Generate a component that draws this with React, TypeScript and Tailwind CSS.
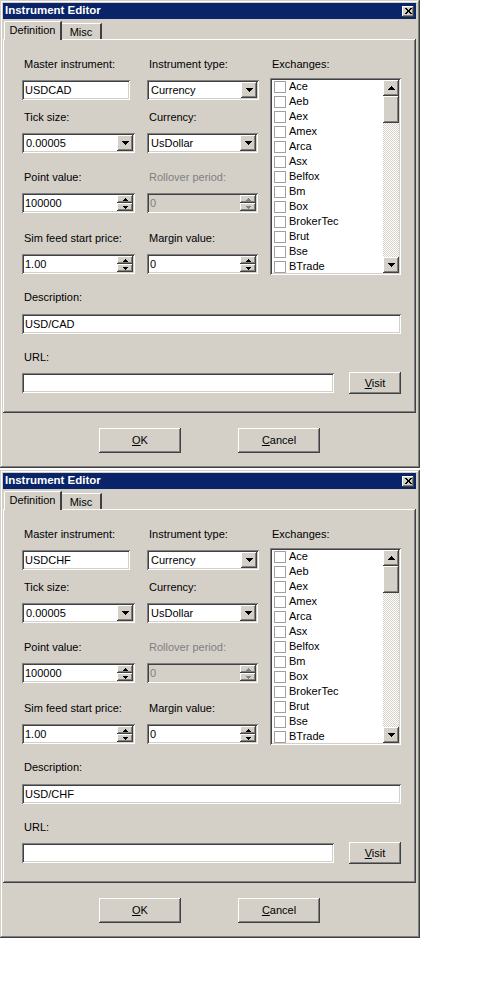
import React from "react";

const RAISED =
  "shadow-[inset_-1px_-1px_#404040,inset_1px_1px_#ffffff,inset_-2px_-2px_#808080,inset_2px_2px_#d4d0c8]";
const SUNKEN =
  "shadow-[inset_1px_1px_#808080,inset_-1px_-1px_#ffffff,inset_2px_2px_#404040,inset_-2px_-2px_#d4d0c8]";

function DownTri({ c = "#000" }: { c?: string }) {
  return (
    <svg width="7" height="4" viewBox="0 0 7 4" className="block">
      <path d="M0 0h7v1h-1v1h-1v1h-1v1h-1v-1h-1v-1h-1v-1h-1z" fill={c} />
    </svg>
  );
}
function UpTri({ c = "#000" }: { c?: string }) {
  return (
    <svg width="7" height="4" viewBox="0 0 7 4" className="block">
      <path d="M0 4h7v-1h-1v-1h-1v-1h-1v-1h-1v1h-1v1h-1v1h-1z" fill={c} />
    </svg>
  );
}
function SmallUp({ c = "#000" }: { c?: string }) {
  return (
    <svg width="5" height="3" viewBox="0 0 5 3" className="block">
      <path d="M0 3h5v-1h-1v-1h-1v-1h-1v1h-1v1h-1z" fill={c} />
    </svg>
  );
}
function SmallDown({ c = "#000" }: { c?: string }) {
  return (
    <svg width="5" height="3" viewBox="0 0 5 3" className="block">
      <path d="M0 0h5v1h-1v1h-1v1h-1v-1h-1v-1h-1z" fill={c} />
    </svg>
  );
}

function Label({ children, disabled }: { children: React.ReactNode; disabled?: boolean }) {
  return (
    <div
      className={`h-[13px] leading-[13px] pl-[2px] whitespace-nowrap ${disabled ? "text-[#808080]" : "text-black"}`}
    >
      {children}
    </div>
  );
}

function TextBox({ value, w }: { value: string; w: string }) {
  return (
    <div className={`${w} h-[20px] bg-white ${SUNKEN} flex items-center pl-[3px] leading-none whitespace-nowrap`}>
      {value}
    </div>
  );
}

function Combo({ value, w }: { value: string; w: string }) {
  return (
    <div className={`${w} h-[20px] bg-white ${SUNKEN} flex items-center pl-[4px] pr-[2px]`}>
      <span className="flex-1 leading-none whitespace-nowrap">{value}</span>
      <div className={`w-[16px] h-[16px] bg-[#d4d0c8] ${RAISED} flex items-center justify-center`}>
        <DownTri />
      </div>
    </div>
  );
}

function Spin({ value, w, disabled }: { value: string; w: string; disabled?: boolean }) {
  const c = disabled ? "#808080" : "#000";
  return (
    <div
      className={`${w} h-[20px] ${disabled ? "bg-[#d4d0c8] text-[#808080]" : "bg-white text-black"} ${SUNKEN} flex items-center pl-[3px] pr-[2px]`}
    >
      <span className="flex-1 leading-none whitespace-nowrap">{value}</span>
      <div className="flex flex-col w-[16px] h-[16px]">
        <div className={`h-[8px] bg-[#d4d0c8] ${RAISED} flex items-center justify-center`}>
          <SmallUp c={c} />
        </div>
        <div className={`h-[8px] bg-[#d4d0c8] ${RAISED} flex items-center justify-center`}>
          <SmallDown c={c} />
        </div>
      </div>
    </div>
  );
}

const EXCHANGES = [
  "Ace",
  "Aeb",
  "Aex",
  "Amex",
  "Arca",
  "Asx",
  "Belfox",
  "Bm",
  "Box",
  "BrokerTec",
  "Brut",
  "Bse",
  "BTrade",
];

function ExchangeList() {
  return (
    <div className={`w-[131px] h-[197px] bg-white ${SUNKEN} p-[2px] flex`}>
      <div className="flex-1 overflow-hidden flex flex-col">
        <div className="-mt-[1px] flex flex-col">
          {EXCHANGES.map((e) => (
            <div key={e} className="h-[15px] shrink-0 flex items-center pl-[2px]">
              <div className="w-[12px] h-[12px] border border-[#a0a0a0] bg-white shrink-0" />
              <span className="ml-[3px] leading-none whitespace-nowrap">{e}</span>
            </div>
          ))}
        </div>
      </div>
      <div className="w-[16px] flex flex-col">
        <div className={`h-[16px] bg-[#d4d0c8] ${RAISED} flex items-center justify-center`}>
          <UpTri />
        </div>
        <div className="flex-1 flex flex-col bg-[image:repeating-conic-gradient(#d4d0c8_0%_25%,#ffffff_0%_50%)] bg-[length:2px_2px]">
          <div className={`h-[27px] bg-[#d4d0c8] ${RAISED}`} />
        </div>
        <div className={`h-[16px] bg-[#d4d0c8] ${RAISED} flex items-center justify-center`}>
          <DownTri />
        </div>
      </div>
    </div>
  );
}

function Button({ children, w, h }: { children: React.ReactNode; w: string; h: string }) {
  return (
    <div className={`${w} ${h} bg-[#d4d0c8] ${RAISED} flex items-center justify-center leading-none`}>
      {children}
    </div>
  );
}

function Dialog({ sym, desc }: { sym: string; desc: string }) {
  return (
    <div
      className={`w-[420px] h-[468px] bg-[#d4d0c8] pt-[3px] pl-[3px] pr-[4px] pb-[3px] flex flex-col shadow-[inset_-1px_-1px_#404040,inset_1px_1px_#d4d0c8,inset_-2px_-2px_#808080,inset_2px_2px_#ffffff] text-[11px] text-black font-['Liberation_Sans',Arial,sans-serif]`}
    >
      {/* Title bar */}
      <div className="h-[16px] bg-[#0a246a] flex items-center justify-between pl-[2px] pr-[2px]">
        <span className="text-white font-bold text-[11.5px] leading-none whitespace-nowrap">Instrument Editor</span>
        <div className={`w-[12px] h-[11px] bg-[#d4d0c8] ${RAISED} flex items-center justify-center`}>
          <svg width="7" height="6" viewBox="0 0 7 6" className="block">
            <path
              d="M0 0h2v1h1v1h1v-1h1v-1h2v1h-1v1h-1v2h1v1h1v1h-2v-1h-1v-1h-1v1h-1v1h-2v-1h1v-1h1v-2h-1v-1h-1z"
              fill="#000"
            />
          </svg>
        </div>
      </div>

      {/* Tabs */}
      <div className="flex items-end h-[19px] mt-[1px] pl-[1px]">
        <div className="relative z-10 -mb-[1px] h-[19px] w-[58px] bg-[#d4d0c8] border-l border-t border-white border-r-2 border-r-[#404040] rounded-tl-[2px] flex items-start justify-center pt-[3px] leading-none">
          Definition
        </div>
        <div className="h-[16px] w-[40px] bg-[#d4d0c8] border-t border-white border-r-2 border-r-[#404040] flex items-start justify-center pt-[3px] leading-none">
          Misc
        </div>
      </div>

      {/* Panel */}
      <div className="h-[374px] bg-[#d4d0c8] shadow-[inset_-1px_-1px_#404040,inset_1px_1px_#ffffff,inset_-2px_-2px_#808080] pt-[19px] pl-[19px] pr-[15px] flex flex-col">
        <div className="flex">
          <div className="flex flex-col">
            <div className="flex gap-[12px]">
              <div className="w-[113px] flex flex-col">
                <Label>Master instrument:</Label>
                <div className="mt-[9px]">
                  <TextBox value={sym} w="w-[108px]" />
                </div>
              </div>
              <div className="w-[112px] flex flex-col">
                <Label>Instrument type:</Label>
                <div className="mt-[9px]">
                  <Combo value="Currency" w="w-[112px]" />
                </div>
              </div>
            </div>
            <div className="flex gap-[12px] mt-[11px]">
              <div className="w-[113px] flex flex-col">
                <Label>Tick size:</Label>
                <div className="mt-[9px]">
                  <Combo value="0.00005" w="w-[113px]" />
                </div>
              </div>
              <div className="w-[112px] flex flex-col">
                <Label>Currency:</Label>
                <div className="mt-[9px]">
                  <Combo value="UsDollar" w="w-[111px]" />
                </div>
              </div>
            </div>
            <div className="flex gap-[12px] mt-[18px]">
              <div className="w-[113px] flex flex-col">
                <Label>Point value:</Label>
                <div className="mt-[9px]">
                  <Spin value="100000" w="w-[113px]" />
                </div>
              </div>
              <div className="w-[112px] flex flex-col">
                <Label disabled>Rollover period:</Label>
                <div className="mt-[9px]">
                  <Spin value="0" w="w-[111px]" disabled />
                </div>
              </div>
            </div>
            <div className="flex gap-[12px] mt-[19px]">
              <div className="w-[113px] flex flex-col">
                <Label>Sim feed start price:</Label>
                <div className="mt-[9px]">
                  <Spin value="1.00" w="w-[113px]" />
                </div>
              </div>
              <div className="w-[112px] flex flex-col">
                <Label>Margin value:</Label>
                <div className="mt-[9px]">
                  <Spin value="0" w="w-[111px]" />
                </div>
              </div>
            </div>
          </div>
          <div className="ml-[11px] flex flex-col">
            <Label>Exchanges:</Label>
            <div className="mt-[7px]">
              <ExchangeList />
            </div>
          </div>
        </div>

        <div className="mt-[16px]">
          <Label>Description:</Label>
        </div>
        <div className="mt-[10px]">
          <TextBox value={desc} w="w-[379px]" />
        </div>

        <div className="mt-[17px]">
          <Label>URL:</Label>
        </div>
        <div className="mt-[8px] flex items-center">
          <TextBox value="" w="w-[313px]" />
          <div className="ml-[15px]">
            <Button w="w-[52px]" h="h-[22px]">
              <span>
                <u>V</u>isit
              </span>
            </Button>
          </div>
        </div>
      </div>

      {/* Bottom buttons */}
      <div className="flex mt-[15px] pl-[96px] gap-[57px]">
        <Button w="w-[82px]" h="h-[25px]">
          <span>
            <u>O</u>K
          </span>
        </Button>
        <Button w="w-[82px]" h="h-[25px]">
          <span>
            <u>C</u>ancel
          </span>
        </Button>
      </div>
    </div>
  );
}

export default function App() {
  return (
    <div className="w-[500px] h-[1000px] bg-white flex flex-col gap-[2px]">
      <Dialog sym="USDCAD" desc="USD/CAD" />
      <Dialog sym="USDCHF" desc="USD/CHF" />
    </div>
  );
}
